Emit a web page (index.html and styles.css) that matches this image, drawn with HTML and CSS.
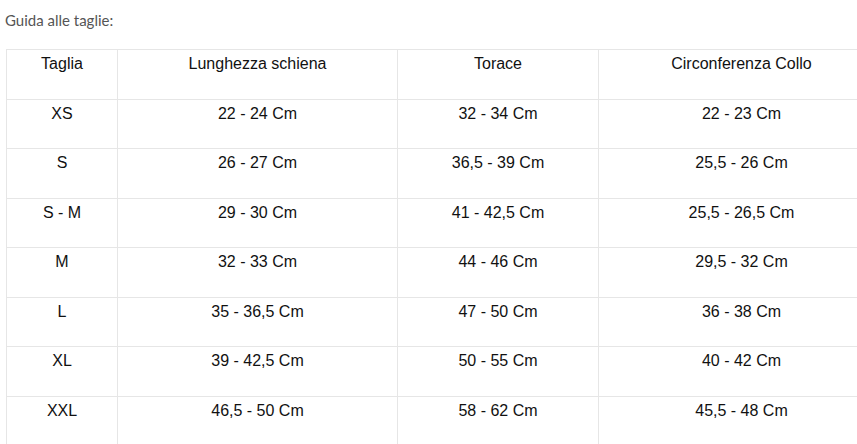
FILE: index.html
```html
<!DOCTYPE html>
<html lang="it">
<head>
<meta charset="utf-8">
<title>Guida alle taglie</title>
<link rel="stylesheet" href="styles.css">
</head>
<body>
<div class="page">
  <p class="title">Guida alle taglie:</p>
  <table class="sizes">
    <colgroup>
      <col class="c1"><col class="c2"><col class="c3"><col class="c4">
    </colgroup>
    <tbody>
      <tr><td>Taglia</td><td>Lunghezza schiena</td><td>Torace</td><td>Circonferenza Collo</td></tr>
      <tr><td>XS</td><td>22 - 24 Cm</td><td>32 - 34 Cm</td><td>22 - 23 Cm</td></tr>
      <tr><td>S</td><td>26 - 27 Cm</td><td>36,5 - 39 Cm</td><td>25,5 - 26 Cm</td></tr>
      <tr><td>S - M</td><td>29 - 30 Cm</td><td>41 - 42,5 Cm</td><td>25,5 - 26,5 Cm</td></tr>
      <tr><td>M</td><td>32 - 33 Cm</td><td>44 - 46 Cm</td><td>29,5 - 32 Cm</td></tr>
      <tr><td>L</td><td>35 - 36,5 Cm</td><td>47 - 50 Cm</td><td>36 - 38 Cm</td></tr>
      <tr><td>XL</td><td>39 - 42,5 Cm</td><td>50 - 55 Cm</td><td>40 - 42 Cm</td></tr>
      <tr><td>XXL</td><td>46,5 - 50 Cm</td><td>58 - 62 Cm</td><td>45,5 - 48 Cm</td></tr>
    </tbody>
  </table>
</div>
</body>
</html>
```
FILE: styles.css
```css
html, body {
  margin: 0;
  padding: 0;
  background: #fff;
  overflow: hidden;
}
.page {
  padding: 9px 0 0 5px;
}
.title {
  margin: 0 0 18px 0;
  font-family: Lato, "Liberation Sans", sans-serif;
  font-size: 15px;
  line-height: 22px;
  color: #555;
}
.sizes {
  margin-left: 1px;
  border-collapse: collapse;
  table-layout: fixed;
  width: 878px;
  font-family: "Liberation Sans", Arial, sans-serif;
  font-size: 16px;
  color: #111;
}
.c1 { width: 111px; }
.c2 { width: 280px; }
.c3 { width: 201px; }
.c4 { width: 286px; }
.sizes td {
  border: 1px solid #e6e6e6;
  text-align: center;
  vertical-align: top;
  line-height: 18px;
  padding: 5px 8px 25.5px;
}
```
